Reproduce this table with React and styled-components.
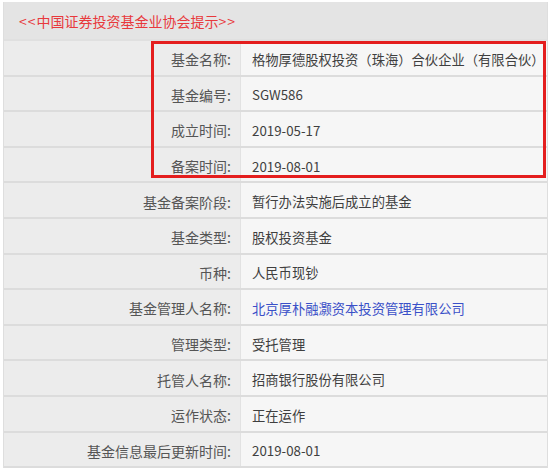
import React from "react";
import styled, { createGlobalStyle } from "styled-components";

const GlobalStyle = createGlobalStyle`
  html, body {
    margin: 0;
    padding: 0;
    background: #ffffff;
  }
  body {
    font-family: "Noto Sans CJK SC", "Noto Sans", sans-serif;
  }
`;

const Page = styled.div`
  width: 550px;
  height: 470px;
  overflow: hidden;
  padding: 2px 2px 0 3px;
  box-sizing: border-box;
`;

const Panel = styled.div`
  position: relative;
  border-left: 1px solid #dedede;
  border-right: 1px solid #dedede;
  background: #f1f1f1;
`;

const Header = styled.div`
  height: 37px;
  display: flex;
  align-items: center;
  padding-left: 15px;
  background: #e4e4e4;
  color: #e8393c;
  font-size: 14px;
  border-bottom: 2px solid #e0e0e0;

  span {
    letter-spacing: 1px;
  }
`;

const Row = styled.div`
  display: grid;
  grid-template-columns: 237px 1fr;
  height: 33.6px;
  border-bottom: 2px solid #dcdcdc;
`;

const Label = styled.div`
  display: flex;
  align-items: center;
  justify-content: flex-end;
  padding: 3px 9px 0 0;
  background: #ececec;
  color: #555555;
  font-size: 14px;
  border-right: 1px solid #e2e2e2;
`;

const Value = styled.div`
  display: flex;
  align-items: center;
  padding: 3px 0 0 11px;
  background: #f6f6f6;
  color: ${(p) => (p.$link ? "#3a50c8" : "#3f3f3f")};
  font-size: 13.3px;
  white-space: nowrap;
`;

const Highlight = styled.div`
  position: absolute;
  left: 147px;
  top: 39px;
  width: 389px;
  height: 131px;
  border: 3px solid #e41e1e;
  pointer-events: none;
`;

const rows = [
  ["基金名称:", "格物厚德股权投资（珠海）合伙企业（有限合伙）"],
  ["基金编号:", "SGW586"],
  ["成立时间:", "2019-05-17"],
  ["备案时间:", "2019-08-01"],
  ["基金备案阶段:", "暂行办法实施后成立的基金"],
  ["基金类型:", "股权投资基金"],
  ["币种:", "人民币现钞"],
  ["基金管理人名称:", "北京厚朴融灏资本投资管理有限公司", true],
  ["管理类型:", "受托管理"],
  ["托管人名称:", "招商银行股份有限公司"],
  ["运作状态:", "正在运作"],
  ["基金信息最后更新时间:", "2019-08-01"],
];

export default function App() {
  return (
    <>
      <GlobalStyle />
      <Page>
        <Panel>
          <Header>
            <span>&lt;&lt;</span>中国证券投资基金业协会提示<span>&gt;&gt;</span>
          </Header>
          {rows.map(([label, value, link]) => (
            <Row key={label}>
              <Label>{label}</Label>
              <Value $link={link}>{value}</Value>
            </Row>
          ))}
          <Highlight />
        </Panel>
      </Page>
    </>
  );
}
